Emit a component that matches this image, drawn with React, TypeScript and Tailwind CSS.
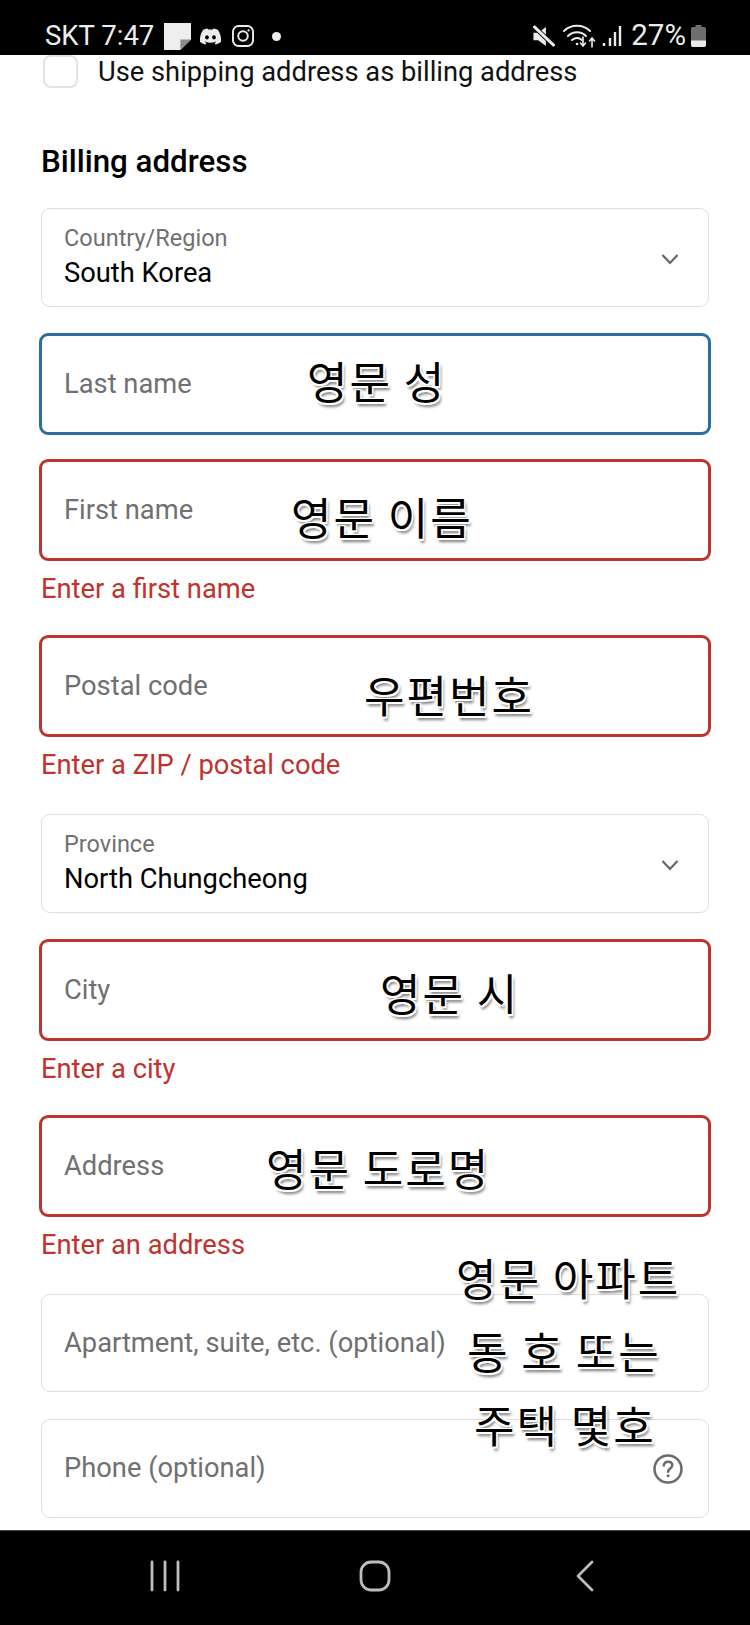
import React from "react";
import { FaDiscord } from "react-icons/fa";

const ROBOTO = "font-['Roboto','Liberation_Sans',sans-serif]";

function Note({ children, className }: { children: React.ReactNode; className: string }) {
  return (
    <span
      className={`absolute z-10 whitespace-nowrap font-['Noto_Sans_CJK_KR',sans-serif] text-[44px] leading-none tracking-[2px] text-black [text-shadow:-1.5px_-1.5px_0_#fff,1.5px_-1.5px_0_#fff,-1.5px_1.5px_0_#fff,1.5px_1.5px_0_#fff,2px_4px_3px_#777] ${className}`}
    >
      {children}
    </span>
  );
}

function Select({ label, value, className }: { label: string; value: string; className: string }) {
  return (
    <div className={`flex h-[99px] items-center justify-between rounded-[9px] border border-[#dedede] pl-[22px] pr-[28px] ${className}`}>
      <div className="flex flex-col">
        <span className="text-[23.5px] leading-[29px] text-[#707070]">{label}</span>
        <span className="mt-[2px] text-[27.3px] leading-[36px] text-black">{value}</span>
      </div>
      <svg width="20" height="20" viewBox="0 0 20 20" fill="none" stroke="#666" strokeWidth="2.2" className="mt-[2px]">
        <path d="M2.5 6l7.5 8 7.500-8" />
      </svg>
    </div>
  );
}

function Field({
  label,
  tone,
  error,
  note,
  noteClass,
  className,
}: {
  label: string;
  tone: "red" | "blue";
  error?: string;
  note?: string;
  noteClass?: string;
  className: string;
}) {
  const box = tone === "red" ? "border-[#c0322d]" : "border-[#2a6f9f]";
  return (
    <div className={className}>
      <div className={`relative -mx-[2px] flex h-[102px] items-center rounded-[9px] border-[3px] pl-[22px] ${box}`}>
        <span className="text-[27.3px] text-[#707070]">{label}</span>
        {note ? <Note className={noteClass ?? ""}>{note}</Note> : null}
      </div>
      {error ? <p className="mt-[11px] text-[27.3px] leading-[34px] text-[#c0322d]">{error}</p> : null}
    </div>
  );
}

function StatusBar() {
  return (
    <div className="flex h-[55px] shrink-0 items-center justify-between bg-black pl-[45px] pr-[44px] pt-[17px] text-[#ececec]">
      <div className="flex items-center">
        <span className="text-[27.5px] leading-none">SKT 7:47</span>
        <svg width="27" height="27" viewBox="0 0 28 28" className="ml-[10px]">
          <path d="M0 0h28v17L17 28H0z" fill="#eee" />
          <path d="M17 28V17h11z" fill="#8a8a8a" />
        </svg>
        <FaDiscord className="ml-[8px]" size={23} color="#ececec" />
        <svg width="22" height="22" viewBox="0 0 23 23" fill="none" stroke="#ececec" strokeWidth="2" className="ml-[10px]">
          <rect x="1" y="1" width="21" height="21" rx="6" />
          <circle cx="11.5" cy="11.5" r="5" />
          <circle cx="17.3" cy="5.7" r="1.2" fill="#ececec" stroke="none" />
        </svg>
        <span className="ml-[18px] h-[9px] w-[9px] rounded-full bg-[#ececec]" />
      </div>
      <div className="flex items-center">
        <svg width="24" height="23" viewBox="0 0 24 24" className="mr-[7px]">
          <path d="M1 8h5l8-6v20l-8-6H1z" fill="#ececec" />
          <path d="M3 3l20 19" stroke="#000" strokeWidth="5" />
          <path d="M2 2l20 19" stroke="#ececec" strokeWidth="3" strokeLinecap="round" />
        </svg>
        <svg width="33" height="24" viewBox="0 0 33 24" fill="none" stroke="#ececec" strokeWidth="2" strokeLinecap="round">
          <path d="M1 7c7-7 19-7 26 0" />
          <path d="M5 12c5-5 13-5 18 0" />
          <path d="M9 16c3-2.500 7-2.500 10 0" />
          <circle cx="14" cy="20" r="1.300" fill="#ececec" stroke="none" />
          <path d="M20 13v9m-2.500-3l2.500 3 2.500-3M29 23v-9m-2.500 3l2.500-3 2.500 3" strokeWidth="1.600" />
        </svg>
        <svg width="20" height="22" viewBox="0 0 20 22" stroke="#ececec" strokeWidth="2.400" className="ml-[6px]">
          <path d="M2 21v-3M8 21v-8M13 21V7M18 21V1" />
        </svg>
        <span className="ml-[9px] text-[29.5px] leading-none">27%</span>
        <svg width="15" height="22" viewBox="0 0 15 22" className="ml-[5px]">
          <path d="M4.500 0h6v2H13a2 2 0 0 1 2 2v16a2 2 0 0 1-2 2H2a2 2 0 0 1-2-2V4a2 2 0 0 1 2-2h2.500z" fill="#6e6e6e" />
          <path d="M0 15.500h15V20a2 2 0 0 1-2 2H2a2 2 0 0 1-2-2z" fill="#ececec" />
        </svg>
      </div>
    </div>
  );
}

function NavBar() {
  return (
    <div className="flex h-[95px] shrink-0 items-start justify-between border-t border-[#444] bg-black pl-[150px] pr-[155px] pt-[29px]">
      <svg width="30" height="32" viewBox="0 0 30 32" stroke="#bdbdbd" strokeWidth="2.800" strokeLinecap="round">
        <path d="M2 2v28M15 2v28M28 2v28" />
      </svg>
      <svg width="32" height="32" viewBox="0 0 32 32" fill="none" stroke="#bdbdbd" strokeWidth="2.800" className="mr-[6px]">
        <rect x="2" y="2" width="28" height="28" rx="10" />
      </svg>
      <svg width="20" height="32" viewBox="0 0 20 32" fill="none" stroke="#bdbdbd" strokeWidth="2.800" strokeLinecap="round" strokeLinejoin="round">
        <path d="M17 2L3 16l14 14" />
      </svg>
    </div>
  );
}

export default function App() {
  return (
    <div className={`flex h-[1625px] w-[750px] flex-col overflow-hidden bg-white ${ROBOTO}`}>
      <StatusBar />
      <main className="relative flex-1 overflow-hidden px-[41px]">
        <label className="flex h-[33px] items-center">
          <span className="ml-[2px] h-[33px] w-[35px] rounded-[8px] border-2 border-[#e2e2e2]" />
          <span className="ml-[20px] text-[27.3px] leading-[30px] text-[#111]">Use shipping address as billing address</span>
        </label>
        <h2 className="mt-[56px] text-[31.3px] font-medium leading-[36px] text-black">Billing address</h2>
        <Select label="Country/Region" value="South Korea" className="mt-[28px]" />
        <Field label="Last name" tone="blue" note="영문 성" noteClass="left-[265px] top-[22px]" className="mt-[26px]" />
        <Field label="First name" tone="red" error="Enter a first name" note="영문 이름" noteClass="left-[249px] top-[32px]" className="mt-[24px]" />
        <Field label="Postal code" tone="red" error="Enter a ZIP / postal code" note="우편번호" noteClass="left-[322px] top-[34px]" className="mt-[29px]" />
        <Select label="Province" value="North Chungcheong" className="mt-[32px]" />
        <Field label="City" tone="red" error="Enter a city" note="영문 시" noteClass="left-[338px] top-[28px]" className="mt-[26px]" />
        <Field label="Address" tone="red" error="Enter an address" note="영문 도로명" noteClass="left-[224px] top-[27px]" className="mt-[29px]" />
        <div className="relative mt-[32px] flex h-[98px] items-center rounded-[9px] border border-[#dedede] pl-[22px]">
          <span className="text-[27.3px] text-[#707070]">Apartment, suite, etc. (optional)</span>
        </div>
        <div className="relative mt-[27px] flex h-[99px] items-center justify-between rounded-[9px] border border-[#dedede] pl-[22px] pr-[25px]">
          <span className="text-[27.3px] text-[#707070]">Phone (optional)</span>
          <svg width="30" height="30" viewBox="0 0 30 30" fill="none" stroke="#6b6b6b" strokeWidth="2.500">
            <circle cx="15" cy="15" r="13.500" />
            <path d="M10.800 11.500c.3-2.500 2-3.800 4.300-3.800 2.500 0 4.200 1.500 4.200 3.600 0 3.200-4.200 3.300-4.200 6.500" strokeLinecap="round" />
            <circle cx="15.100" cy="21.800" r="1.500" fill="#6b6b6b" stroke="none" />
          </svg>
        </div>
        <Note className="left-[456px] top-[1200px]">영문 아파트</Note>
        <Note className="left-[467px] top-[1273px]">동 호 또는</Note>
        <Note className="left-[474px] top-[1347px]">주택 몇호</Note>
      </main>
      <NavBar />
    </div>
  );
}
